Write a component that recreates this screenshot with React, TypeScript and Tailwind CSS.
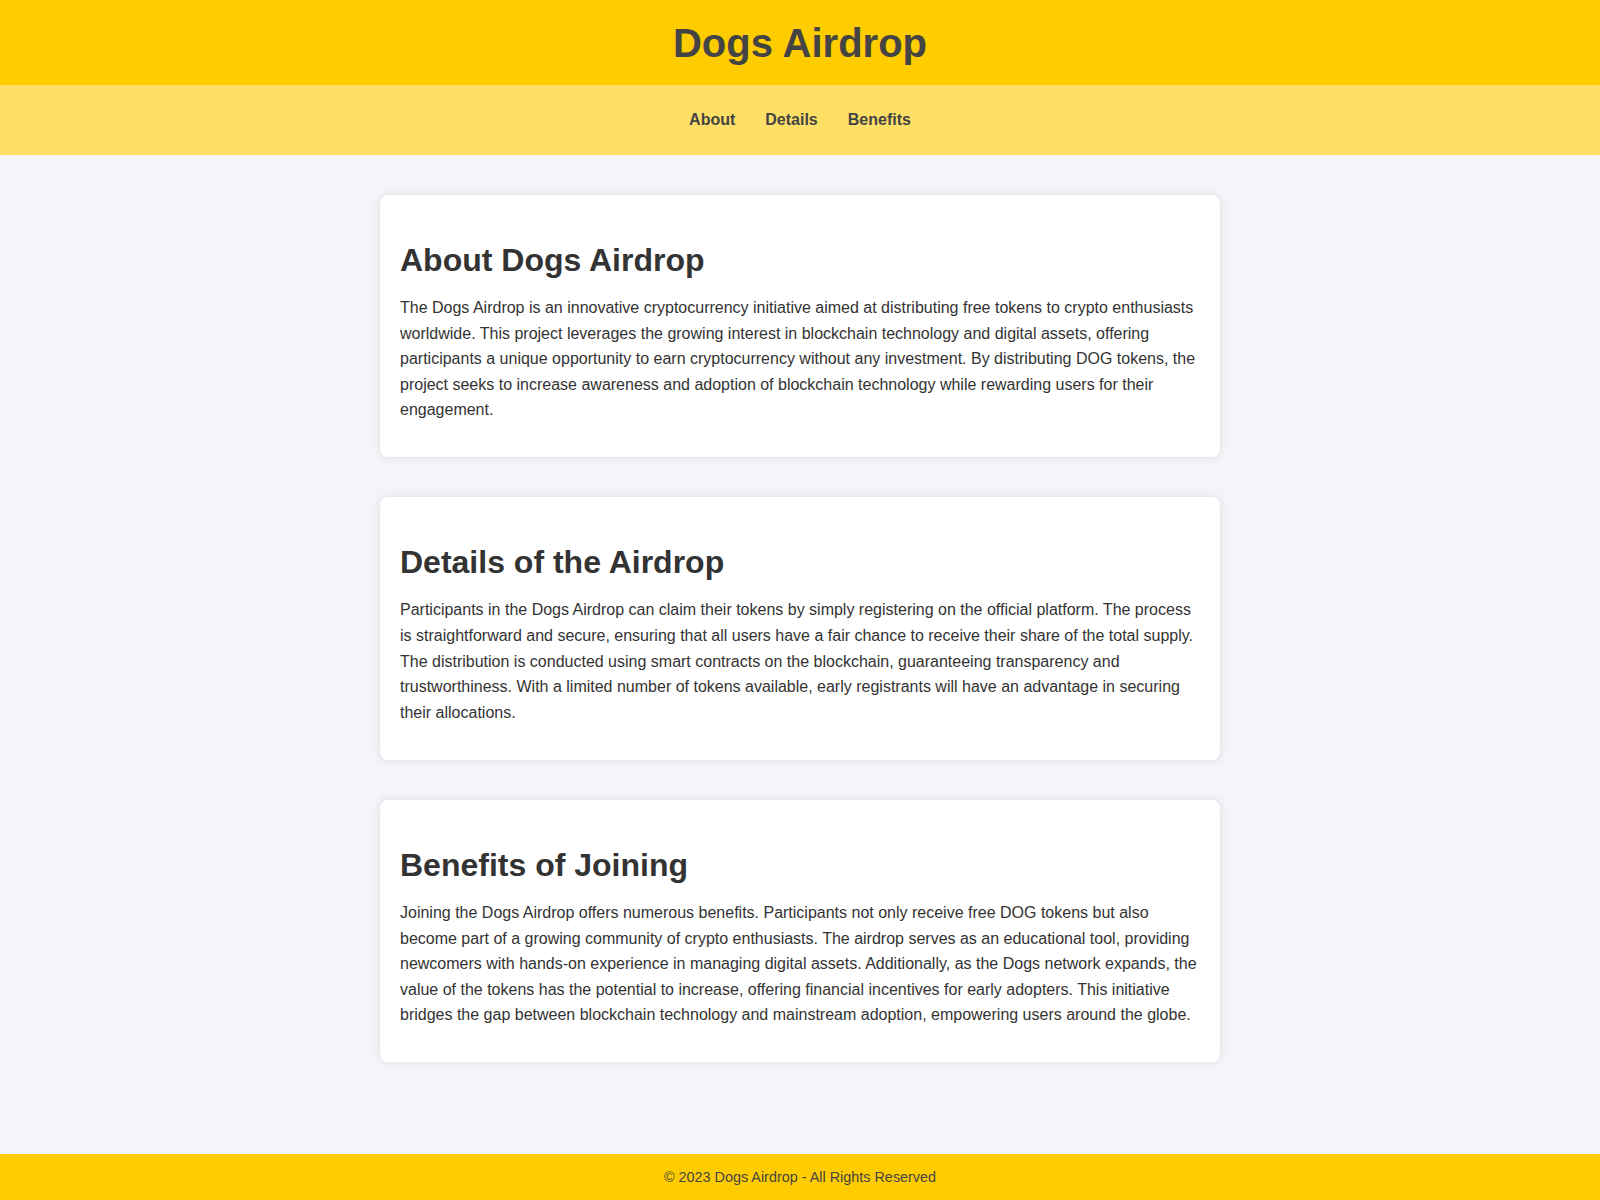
const sections = [
  {
    id: "about",
    title: "About Dogs Airdrop",
    body: "The Dogs Airdrop is an innovative cryptocurrency initiative aimed at distributing free tokens to crypto enthusiasts worldwide. This project leverages the growing interest in blockchain technology and digital assets, offering participants a unique opportunity to earn cryptocurrency without any investment. By distributing DOG tokens, the project seeks to increase awareness and adoption of blockchain technology while rewarding users for their engagement.",
  },
  {
    id: "details",
    title: "Details of the Airdrop",
    body: "Participants in the Dogs Airdrop can claim their tokens by simply registering on the official platform. The process is straightforward and secure, ensuring that all users have a fair chance to receive their share of the total supply. The distribution is conducted using smart contracts on the blockchain, guaranteeing transparency and trustworthiness. With a limited number of tokens available, early registrants will have an advantage in securing their allocations.",
  },
  {
    id: "benefits",
    title: "Benefits of Joining",
    body: "Joining the Dogs Airdrop offers numerous benefits. Participants not only receive free DOG tokens but also become part of a growing community of crypto enthusiasts. The airdrop serves as an educational tool, providing newcomers with hands-on experience in managing digital assets. Additionally, as the Dogs network expands, the value of the tokens has the potential to increase, offering financial incentives for early adopters. This initiative bridges the gap between blockchain technology and mainstream adoption, empowering users around the globe.",
  },
];

const links = [
  { href: "#about", label: "About" },
  { href: "#details", label: "Details" },
  { href: "#benefits", label: "Benefits" },
];

export default function App() {
  return (
    <div className="min-h-screen flex flex-col bg-[#f4f4f9] text-[#333] font-['Liberation_Sans',Arial,sans-serif]">
      <header className="bg-[#ffcc00] h-[85px] flex items-center justify-center">
        <h1 className="text-[40px] font-bold leading-[46px] text-[#444]">Dogs Airdrop</h1>
      </header>

      <nav className="bg-[#ffe066] h-[70px] flex items-center justify-center">
        <ul className="flex flex-row gap-[30px]">
          {links.map((l) => (
            <li key={l.href}>
              <a href={l.href} className="text-base font-bold leading-[18px] text-[#444]">
                {l.label}
              </a>
            </li>
          ))}
        </ul>
      </nav>

      <main className="flex-1 flex flex-col items-center gap-10 pt-10 pb-10">
        {sections.map((s) => (
          <section
            key={s.id}
            id={s.id}
            className="w-[840px] bg-white rounded-lg shadow-[0_0_10px_rgba(0,0,0,0.1)] px-5 pt-[47px] pb-[34.5px]"
          >
            <h2 className="text-[32px] font-bold leading-[37px] text-[#333] mb-4">{s.title}</h2>
            <p className="text-base leading-[25.6px] text-[#333]">{s.body}</p>
          </section>
        ))}
      </main>

      <footer className="bg-[#ffcc00] h-[46px] flex items-center justify-center pt-px">
        <p className="text-[14.4px] text-[#444]">© 2023 Dogs Airdrop - All Rights Reserved</p>
      </footer>
    </div>
  );
}
